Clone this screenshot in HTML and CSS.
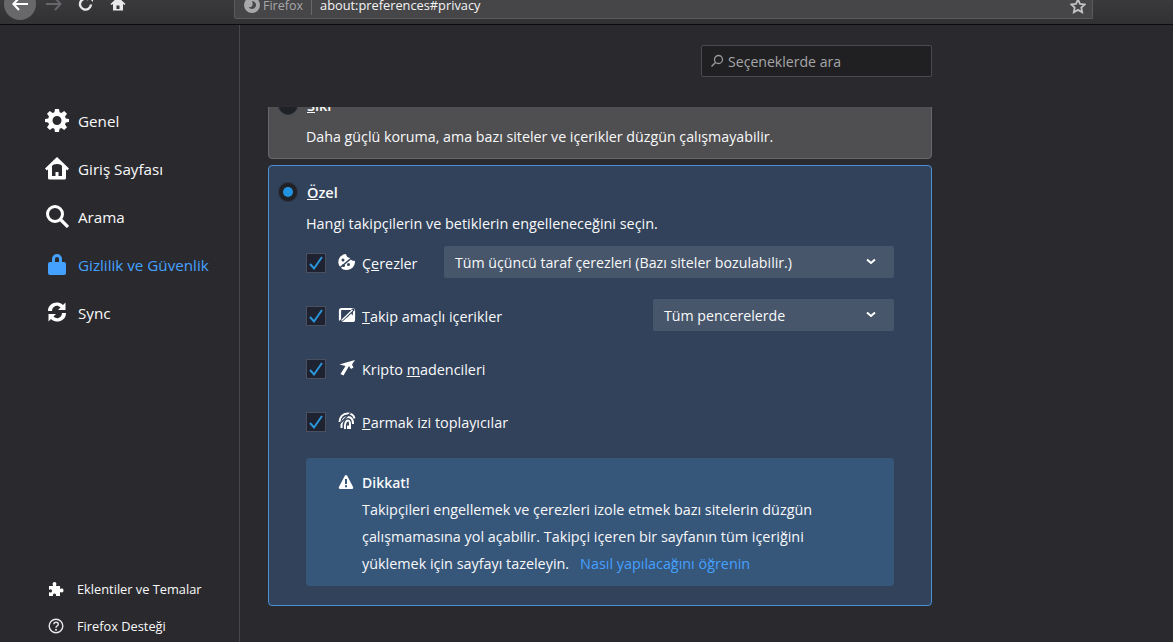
FILE: index.html
```html
<!DOCTYPE html>
<html lang="tr">
<head>
<meta charset="utf-8">
<title>Seçenekler</title>
<link rel="stylesheet" href="styles.css">
</head>
<body>
<header class="toolbar">
  <div class="nav-btns">
    <span class="back"><svg width="18" height="16" viewBox="0 0 18 16"><path d="M8 2 2.500 8 8 14M3 8h14" fill="none" stroke="#fff" stroke-width="2.200"/></svg></span>
    <svg class="fwd" width="18" height="16" viewBox="0 0 18 16"><path d="M10 2l5.500 6L10 14M15 8H1" fill="none" stroke="#66666a" stroke-width="2"/></svg>
    <svg class="reload" width="16" height="16" viewBox="0 0 16 16"><path d="M13 8.500A5.500 5.500 0 1 1 10.500 3.500" fill="none" stroke="#e8e8ea" stroke-width="2.400"/><path d="M9 0h6v6z" fill="#e8e8ea"/></svg>
    <svg class="home" width="16" height="16" viewBox="0 0 16 16"><path d="M8 1 .5 8l1 1L3 8v6.500h10V8l1.500 1 1-1zM6.500 13V9.500h3V13z" fill="#e8e8ea"/></svg>
  </div>
  <div class="urlbar">
    <svg class="ff" width="16" height="16" viewBox="0 0 16 16"><circle cx="8" cy="8" r="8" fill="#a8a8aa"/><path d="M8 4a4 4 0 1 1-3.500 6C7 11 10 9 8 4z" fill="#47474a"/></svg>
    <span class="identity">Firefox</span>
    <span class="url">about:preferences#privacy</span>
    <svg class="star" width="16" height="16" viewBox="0 0 16 16"><path d="M8 1.500l2 4.300 4.700.6-3.400 3.200.9 4.600L8 11.900 3.800 14.200l.9-4.600L1.300 6.400 6 5.800z" fill="none" stroke="#c4c4c6" stroke-width="1.800"/></svg>
  </div>
</header>
<div class="page">
  <aside class="sidebar">
    <nav class="cats">
      <a class="cat"><svg width="24" height="24" viewBox="0 0 24 24"><path d="M10 1h4l.6 3.200 1.800.8L19.200 3 22 5.800 20 8.600l.8 1.800L24 11v3l-3.200.6-.8 1.800 2 2.800-2.800 2.800-2.800-2-1.800.8L14 24h-4l-.6-3.200-1.800-.8L4.800 22 2 19.200l2-2.800-.8-1.800L0 14v-3l3.200-.6.800-1.800-2-2.800L4.800 3l2.800 2 1.800-.8zM12 8a4.500 4.500 0 1 0 0 9 4.500 4.500 0 0 0 0-9z" fill="#fff" fill-rule="evenodd"/></svg><span>Genel</span></a>
      <a class="cat"><svg width="24" height="24" viewBox="0 0 24 24"><path d="M12 1 0 12.500l1.800 1.900L3 13.300V22q0 1.500 1.500 1.500h15Q21 23.500 21 22v-8.700l1.200 1.100L24 12.500zM12 8q4 0 5 2v10h-3.500v-4h-3v4H7V10q1-2 5-2z" fill="#fff" fill-rule="evenodd"/></svg><span>Giriş Sayfası</span></a>
      <a class="cat"><svg width="24" height="24" viewBox="0 0 24 24"><circle cx="10" cy="10" r="7.500" fill="none" stroke="#fff" stroke-width="3"/><path d="M15.500 15.500 23 23" stroke="#fff" stroke-width="3.200"/></svg><span>Arama</span></a>
      <a class="cat active"><svg width="24" height="24" viewBox="0 0 24 24"><path d="M7 10V7a5 5 0 0 1 10 0v3h2q2 0 2 2v9q0 2-2 2H5q-2 0-2-2v-9q0-2 2-2zm3 0h4V7a2 2 0 0 0-4 0z" fill="#45a1ff" fill-rule="evenodd"/></svg><span>Gizlilik ve Güvenlik</span></a>
      <a class="cat"><svg width="24" height="24" viewBox="0 0 24 24"><path d="M3 11C3 5 8 2 13 2.500c2.500.3 4 1.500 5 2.500l2.500-2.500V10h-7.500l2.500-2.500C14 6 12 5.500 10.500 6 8.500 6.500 7 8.500 7 11zM21 13c0 6-5 9-10 8.500-2.500-.3-4-1.500-5-2.500l-2.500 2.500V14H11l-2.500 2.500c1.500 1.500 3.500 2 5 1.500 2-.5 3.500-2.500 3.500-5z" fill="#fff"/></svg><span>Sync</span></a>
    </nav>
    <div class="foot">
      <a class="foot-link"><svg width="16" height="16" viewBox="0 0 16 16"><path d="M1 5h4C4 2 5 1 6.500 1S9 2 8 5h4v3c2-1 3.500-.5 3.500 1.500S14 12 12 11v4H8c.5-1.500-.5-2.500-1.500-2.500S4.500 13.500 5 15H1v-4c1.500 1 3 .5 3-1S2.500 7.500 1 9z" fill="#fff"/></svg><span>Eklentiler ve Temalar</span></a>
      <a class="foot-link"><svg width="16" height="16" viewBox="0 0 16 16"><circle cx="8" cy="8" r="6.800" fill="none" stroke="#e8e8ea" stroke-width="1.400"/><path d="M5.800 6.300C5.800 5 6.800 4.200 8 4.200s2.300.8 2.300 2c0 1.800-2.300 1.800-2.300 3.500" fill="none" stroke="#e8e8ea" stroke-width="1.400"/><circle cx="8" cy="11.700" r="1" fill="#e8e8ea"/></svg><span>Firefox Desteği</span></a>
    </div>
  </aside>
  <main class="content">
    <div class="column">
      <div class="search-row">
        <div class="search"><svg width="14" height="14" viewBox="0 0 14 14"><circle cx="8.500" cy="5.500" r="4" fill="none" stroke="#98989a" stroke-width="1.300"/><path d="M5.500 8.500 1.500 12.500" stroke="#98989a" stroke-width="1.500"/></svg><span>Seçeneklerde ara</span></div>
      </div>
      <div class="scroller">
        <section class="card strict">
          <div class="head"><span class="radio off"></span><b class="title"><u>S</u>ıkı</b></div>
          <p class="desc">Daha güçlü koruma, ama bazı siteler ve içerikler düzgün çalışmayabilir.</p>
        </section>
        <section class="card custom">
          <div class="head"><span class="radio on"></span><b class="title"><u>Ö</u>zel</b></div>
          <p class="desc desc-wide">Hangi takipçilerin ve betiklerin engelleneceğini seçin.</p>
          <div class="rows">
            <div class="row">
              <span class="check"><svg width="16" height="16" viewBox="0 0 16 16"><path d="M2 9l4 4.500L14 2" fill="none" stroke="#2a97dc" stroke-width="2"/></svg></span>
              <svg class="ic" width="18" height="18" viewBox="0 0 18 18"><path d="M8 1c.5 3 2.500 4 4.500 4 0 2 1.500 3 4.500 3 .3 5-3.500 9-8.500 9A8 8 0 0 1 8 1zM5 5.500a1.500 1.500 0 1 0 0 3 1.500 1.500 0 0 0 0-3zM5.500 11a1.500 1.500 0 1 0 0 3 1.500 1.500 0 0 0 0-3zM10.500 10a1.500 1.500 0 1 0 0 3 1.500 1.500 0 0 0 0-3z" fill="#fff" fill-rule="evenodd"/><path d="M1 15.500 16 3" stroke="#31425a" stroke-width="1.600"/></svg>
              <span class="lbl lbl-c">Ç<u>e</u>rezler</span>
              <span class="select wide"><span>Tüm üçüncü taraf çerezleri (Bazı siteler bozulabilir.)</span><svg width="10" height="7" viewBox="0 0 10 7"><path d="M1 1.500l4 3.500 4-3.500" fill="none" stroke="#fff" stroke-width="2"/></svg></span>
            </div>
            <div class="row">
              <span class="check"><svg width="16" height="16" viewBox="0 0 16 16"><path d="M2 9l4 4.500L14 2" fill="none" stroke="#2a97dc" stroke-width="2"/></svg></span>
              <svg class="ic" width="18" height="18" viewBox="0 0 18 18"><rect x="2" y="3" width="14" height="12" rx="1.500" fill="none" stroke="#fff" stroke-width="2.200"/><path d="M3 14l4-4 2 1.500 4-4 2 2V14z" fill="#fff"/><path d="M2 16 16 3" stroke="#31425a" stroke-width="2.600"/><path d="M3.500 14.500 14.500 4" stroke="#fff" stroke-width="1.300"/></svg>
              <span class="lbl"><u>T</u>akip amaçlı içerikler</span>
              <span class="select narrow"><span>Tüm pencerelerde</span><svg width="10" height="7" viewBox="0 0 10 7"><path d="M1 1.500l4 3.500 4-3.500" fill="none" stroke="#fff" stroke-width="2"/></svg></span>
            </div>
            <div class="row">
              <span class="check"><svg width="16" height="16" viewBox="0 0 16 16"><path d="M2 9l4 4.500L14 2" fill="none" stroke="#2a97dc" stroke-width="2"/></svg></span>
              <svg class="ic" width="18" height="18" viewBox="0 0 18 18"><path d="M1.500 5.500 8 3.500 17 1l-3 4.500 1.500 3-2.500 1.500-2-3-5.500 9.500-3-1.500L7.500 7z" fill="#fff"/></svg>
              <span class="lbl">Kripto <u>m</u>adencileri</span>
            </div>
            <div class="row">
              <span class="check"><svg width="16" height="16" viewBox="0 0 16 16"><path d="M2 9l4 4.500L14 2" fill="none" stroke="#2a97dc" stroke-width="2"/></svg></span>
              <svg class="ic" width="18" height="18" viewBox="0 0 18 18"><path d="M1.500 10C1.500 5 5 1.500 9.500 1.500S16 4 16.500 6.500M3.500 16C3 10 5.500 5 10 5s5 3.500 5 7M7 17c-.5-4 .5-8.500 3-8.500s2 4 2 8.500M10 17v-3.500" fill="none" stroke="#fff" stroke-width="2"/><path d="M1 12.500 12.500 1" stroke="#31425a" stroke-width="1.200"/></svg>
              <span class="lbl"><u>P</u>armak izi toplayıcılar</span>
            </div>
          </div>
          <div class="warn">
            <svg class="warn-ic" width="16" height="16" viewBox="0 0 16 16"><path d="M8 1q.8 0 1.200.8l6 11.500q.5 1.200-.9 1.700H1.700q-1.400-.5-.9-1.700l6-11.500Q7.200 1 8 1z" fill="#fff"/><path d="M7 5h2v5H7zM7 11.200h2v2H7z" fill="#36567a"/></svg>
            <div class="warn-body">
              <b class="warn-title">Dikkat!</b>
              <p class="warn-text">Takipçileri engellemek ve çerezleri izole etmek bazı sitelerin düzgün çalışmamasına yol açabilir. Takipçi içeren bir sayfanın tüm içeriğini yüklemek için sayfayı tazeleyin.<a class="learn">Nasıl yapılacağını öğrenin</a></p>
            </div>
          </div>
        </section>
      </div>
    </div>
  </main>
</div>
</body>
</html>
```
FILE: styles.css
```css
* { box-sizing: border-box; }
html, body { margin: 0; height: 100%; overflow: hidden; }
body {
  display: flex;
  flex-direction: column;
  background: #2a2a2e;
  color: #f9f9fa;
  font-family: "Open Sans", "Noto Sans", sans-serif;
  font-size: 14px;
}
p { margin: 0; }
svg { display: block; flex: none; }

.toolbar {
  height: 25px;
  flex: none;
  display: flex;
  overflow: hidden;
  background: linear-gradient(#3a3a3c, #313133);
  border-bottom: 1px solid #0c0c0d;
}
.nav-btns { width: 234px; display: flex; align-items: center; height: 8px; padding-left: 4px; }
.back {
  width: 32px; height: 32px; border-radius: 50%;
  background: #68686a;
  display: flex; align-items: center; justify-content: center;
  flex: none;
}
.fwd { margin-left: 9px; }
.reload { margin-left: 15px; }
.home { margin-left: 16px; }
.urlbar {
  width: 859px; height: 19px;
  background: #464648;
  border: 1px solid #5a5a5c;
  border-top: 0;
  border-radius: 0 0 2px 2px;
  display: flex;
  align-items: center;
  padding-left: 9px;
  padding-right: 6px;
}
.ff { margin-top: -8px; }
.identity { color: #a8a8aa; margin-left: 3px; padding-right: 8px; margin-top: -6px; border-right: 1px solid #68686a; line-height: 18px; font-size: 12.500px; }
.url { margin-left: 8px; margin-top: -8px; color: #f4f4f5; flex: 1; font-size: 12.800px; }
.star { margin-top: -6px; }

.page { flex: 1; display: flex; min-height: 0; }
.sidebar {
  width: 240px;
  flex: none;
  border-right: 1px solid #47474b;
  display: flex;
  flex-direction: column;
  justify-content: space-between;
  padding: 72px 0 0 45px;
}
.cats { display: flex; flex-direction: column; }
.cat {
  height: 48px;
  display: flex;
  align-items: center;
  gap: 9px;
  font-size: 15.200px;
  color: #f9f9fa;
}
.cat svg { margin-top: -2px; }
.cat.active { color: #45a1ff; }
.foot { display: flex; flex-direction: column; gap: 12px; padding: 0 0 4px 3px; }
.foot-link { height: 25px; display: flex; align-items: center; gap: 13px; font-size: 12.800px; }

.content { flex: 1; min-width: 0; padding-left: 28px; }
.column { width: 664px; height: 100%; display: flex; flex-direction: column; }
.search-row { display: flex; justify-content: flex-end; padding-top: 20px; height: 82px; flex: none; }
.search {
  width: 231px; height: 32px;
  background: #202023;
  border: 1px solid #4a4a4f;
  border-radius: 2px;
  display: flex;
  align-items: center;
  gap: 4px;
  padding-left: 8px;
  color: #a6a6a8;
  font-size: 14.100px;
}
.scroller { flex: 1; min-height: 0; overflow: hidden; display: flex; flex-direction: column; gap: 6px; }
.card { border-radius: 4px; border: 1px solid; flex: none; }
.strict {
  background: #4f4f52;
  border-color: #68686b;
  height: 72px;
  margin-top: -20px;
  padding: 2px 37px;
}
.custom {
  background: #31425a;
  border-color: #4a90d9;
  height: 441px;
  padding: 11px 37px 0;
}
.head { height: 30px; display: flex; align-items: center; position: relative; }
.radio {
  position: absolute; left: -28px; top: 5px;
  width: 20px; height: 20px; border-radius: 50%;
  background: #202124;
  border: 1px solid #2c3242;
}
.radio.on::after {
  content: ""; display: block; width: 10px; height: 10px; margin: 4px;
  border-radius: 50%; background: #2293e0;
}
.title { font-weight: 600; font-size: 14.500px; margin-left: 1px; }
.desc { margin-top: 2px; line-height: 30px; font-size: 14.250px; }
.desc-wide { font-size: 14.400px; }
.rows { display: flex; flex-direction: column; margin-top: -3px; }
.row { height: 53px; display: flex; align-items: center; }
.check {
  width: 20px; height: 20px;
  background: #1f2230;
  border: 1px solid #4a5060;
  display: flex; align-items: center; justify-content: center;
  flex: none;
}
.ic { margin-left: 12px; margin-right: -2px; margin-top: -1px; }
.lbl { margin-left: 8px; font-size: 14.400px; margin-top: 2px; }
.lbl-c { width: 82px; }
.select {
  height: 32px;
  background: #47566b;
  border-radius: 2px;
  display: flex;
  align-items: center;
  justify-content: space-between;
  padding: 2px 18px 0 11px;
  font-size: 14.200px;
  margin-top: -2px;
}
.select svg { margin-top: -2px; }
.wide { width: 450px; }
.narrow { width: 241px; margin-left: auto; }
.warn {
  margin-top: 10px;
  width: 588px;
  height: 128px;
  background: #36567a;
  border-radius: 4px;
  display: flex;
  padding: 15px 60px 0 32px;
  gap: 8px;
}
.warn-ic { margin-top: 1px; }
.warn-title { display: block; font-weight: 600; font-size: 14px; line-height: 19px; }
.warn-text { margin-top: 4px; line-height: 27px; font-size: 14.380px; }
.learn { color: #45a1ff; margin-left: 11px; }
```
